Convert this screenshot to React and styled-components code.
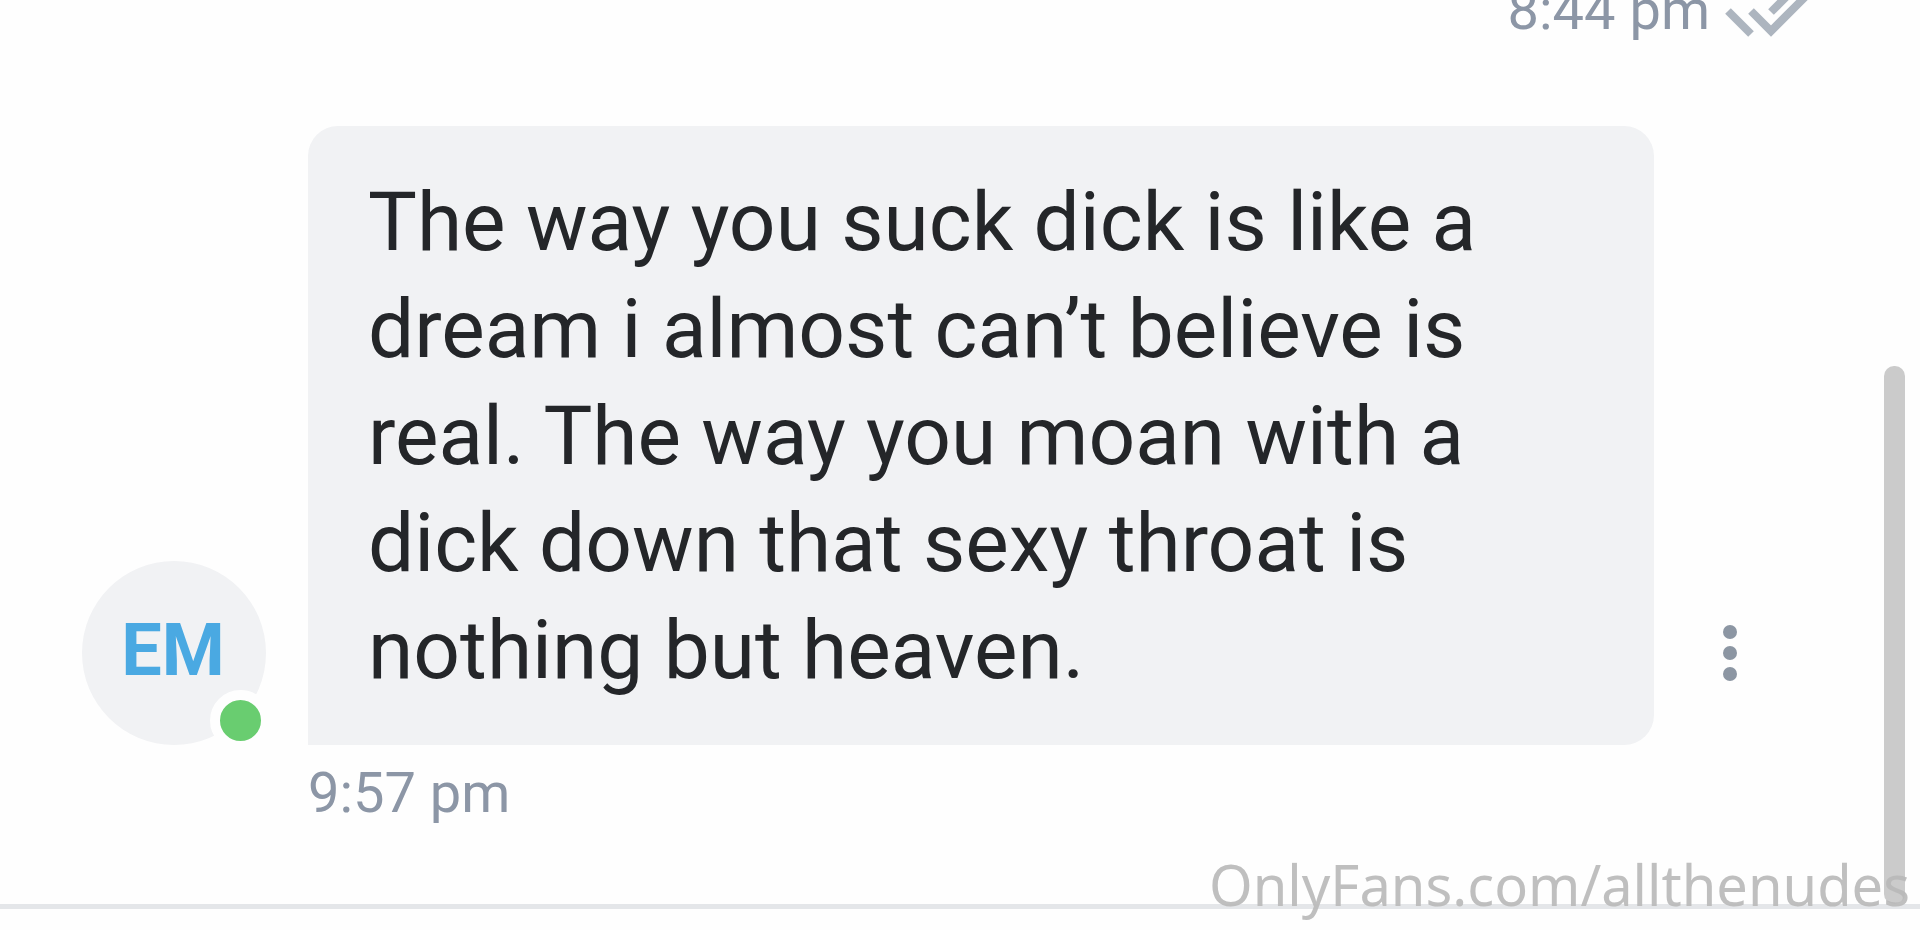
import styled, { createGlobalStyle } from "styled-components";

const GlobalStyle = createGlobalStyle`
  * {
    box-sizing: border-box;
  }

  body {
    margin: 0;
    background-color: #fefefe;
    font-family: Roboto, "Liberation Sans", sans-serif;
    color: #242629;
  }
`;

const Page = styled.div`
  position: relative;
  display: flex;
  flex-direction: column;
  height: 100vh;
  overflow: hidden;
`;

const Chat = styled.main`
  display: flex;
  flex: 1;
  min-height: 0;
`;

// anchored to the newest message, older ones run off the top
const Messages = styled.div`
  display: flex;
  flex: 1;
  flex-direction: column;
  justify-content: flex-end;
  gap: 82px;
  min-width: 0;
  padding: 0 78px 77px 82px;
`;

const Time = styled.time`
  font-size: 56px;
  line-height: 68px;
  color: #8c96a6;
`;

const SentStatus = styled.div`
  display: flex;
  flex-shrink: 0;
  align-items: center;
  justify-content: flex-end;
  gap: 14px;
`;

const TicksIcon = styled.svg`
  width: 82px;
  height: 56px;
  overflow: visible;
  fill: none;
  stroke: #adb5bf;
  stroke-width: 8px;
`;

const Received = styled.article`
  display: grid;
  grid-template-columns: 184px 1fr 152px;
  align-items: end;
  flex-shrink: 0;

  ${Time} {
    grid-column: 2;
    margin: 14px 0 0 42px;
  }
`;

const Avatar = styled.div`
  position: relative;
  display: flex;
  align-items: center;
  justify-content: center;
  height: 184px;
  padding: 0 2px 6px 0;
  border-radius: 50%;
  background-color: #f1f2f4;
  font-size: 72px;
  font-weight: 700;
  color: #4aa9e2;
`;

const OnlineDot = styled.span`
  position: absolute;
  right: -5px;
  bottom: -6px;
  width: 61px;
  height: 61px;
  border: 10px solid #fefefe;
  border-radius: 50%;
  background-color: #69cd70;
`;

const Bubble = styled.p`
  margin: 0 0 0 42px;
  padding: 43px 60px 41px;
  border-radius: 30px 30px 30px 0;
  background-color: #f1f2f4;
  font-size: 82px;
  line-height: 107px;
`;

const MenuButton = styled.button`
  display: flex;
  align-items: center;
  justify-content: center;
  height: 184px;
  padding: 0;
  border: none;
  background: none;
  color: #8c96a3;
  cursor: pointer;
`;

const ScrollTrack = styled.div`
  display: flex;
  flex-direction: column;
  justify-content: flex-end;
  width: 36px;
`;

const ScrollThumb = styled.div`
  width: 21px;
  height: 538px;
  border-radius: 10px;
  background-color: #cbcbcb;
`;

const Composer = styled.footer`
  height: 26px;
  border-top: 5px solid #e4e6e9;
`;

const Watermark = styled.span`
  position: absolute;
  right: 10px;
  bottom: 6px;
  font-family: "Noto Sans", "Open Sans", sans-serif;
  font-size: 56px;
  line-height: 80px;
  color: rgba(184, 184, 184, 0.9);
`;

const Ticks = () => (
  <TicksIcon viewBox="0 0 82 56" role="img" aria-label="Read">
    <path d="M4 29L27 52" />
    <path d="M27 29L47 49L91 5" />
    <path d="M47 30L72 5" />
  </TicksIcon>
);

const Dots = () => (
  <svg width="14" height="56" viewBox="0 0 14 56" fill="currentColor">
    <circle cx="7" cy="7" r="7" />
    <circle cx="7" cy="28" r="7" />
    <circle cx="7" cy="49" r="7" />
  </svg>
);

const message = {
  initials: "EM",
  text: "The way you suck dick is like a dream i almost can’t believe is real. The way you moan with a dick down that sexy throat is nothing but heaven.",
  time: "9:57 pm",
};

const App = () => (
  <>
    <GlobalStyle />
    <Page>
      <Chat>
        <Messages>
          <SentStatus>
            <Time>8:44 pm</Time>
            <Ticks />
          </SentStatus>
          <Received>
            <Avatar>
              {message.initials}
              <OnlineDot />
            </Avatar>
            <Bubble>{message.text}</Bubble>
            <MenuButton type="button" aria-label="Message options">
              <Dots />
            </MenuButton>
            <Time>{message.time}</Time>
          </Received>
        </Messages>
        <ScrollTrack>
          <ScrollThumb />
        </ScrollTrack>
      </Chat>
      <Composer />
      <Watermark>OnlyFans.com/allthenudes</Watermark>
    </Page>
  </>
);

export default App;
